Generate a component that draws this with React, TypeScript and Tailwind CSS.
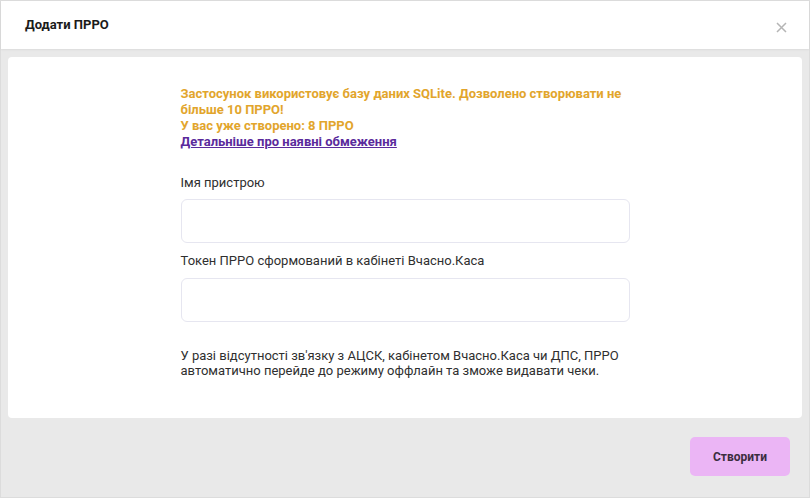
export default function App() {
  return (
    <div className="w-[810px] h-[498px] bg-[#e9e9e9] flex flex-col border border-[#dcdcdc]" style={{ fontFamily: "Roboto, 'Liberation Sans', sans-serif" }}>
      <div className="h-[48px] bg-white flex items-center justify-between pl-[24px] pr-[22px] shadow-[0_1px_2px_rgba(0,0,0,0.06)]">
        <span className="text-[13px] font-bold text-[#1b1b1b]">Додати ПРРО</span>
        <svg width="11" height="11" viewBox="0 0 11 11" className="mt-[4px]">
          <path d="M1 1L10 10M10 1L1 10" stroke="#b5b5b5" strokeWidth="1.5" />
        </svg>
      </div>
      <div className="px-[7px] pt-[8px]">
        <div className="bg-white rounded-[4px] h-[361px] flex justify-center pt-[29px]">
          <div className="w-[449px] flex flex-col">
            <div className="text-[13px] leading-[16px] font-bold text-[#e2a52c]">
              <p>Застосунок використовує базу даних SQLite. Дозволено створювати не більше 10 ПРРО!</p>
              <p>У вас уже створено: 8 ПРРО</p>
              <a className="text-[#5a2a9c] underline">Детальніше про наявні обмеження</a>
            </div>
            <label className="mt-[25px] text-[13px] leading-[16px] text-[#2f2f2f]">Імя пристрою</label>
            <div className="mt-[8px] h-[44px] rounded-[6px] border border-[#e6e6f0]" />
            <label className="mt-[10px] text-[13px] leading-[16px] text-[#2f2f2f]">Токен ПРРО сформований в кабінеті Вчасно.Каса</label>
            <div className="mt-[9px] h-[44px] rounded-[6px] border border-[#e6e6f0]" />
            <p className="mt-[26px] text-[13px] leading-[15px] text-[#2f2f2f]">
              У разі відсутності зв'язку з АЦСК, кабінетом Вчасно.Каса чи ДПС, ПРРО автоматично перейде до режиму оффлайн та зможе видавати чеки.
            </p>
          </div>
        </div>
      </div>
      <div className="flex justify-end pr-[19px] pt-[19px]">
        <button className="w-[100px] h-[39px] rounded-[5px] bg-[#ebb5f5] text-[12px] font-bold text-[#3b2d3e]">Створити</button>
      </div>
    </div>
  );
}
